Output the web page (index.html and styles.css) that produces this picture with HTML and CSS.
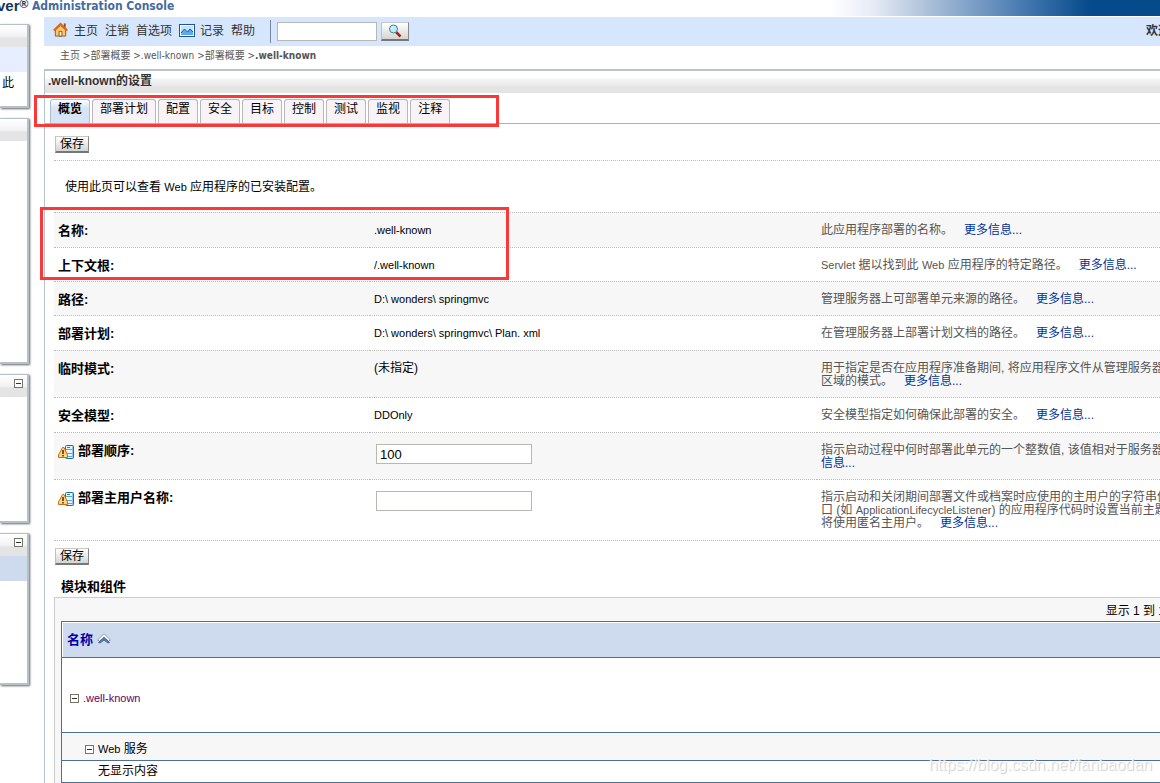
FILE: index.html
```
<!DOCTYPE html>
<html lang="zh-CN">
<head>
<meta charset="utf-8">
<title>.well-known的设置</title>
<link rel="stylesheet" href="styles.css">
</head>
<body>
<svg class="defs" aria-hidden="true">
  <symbol id="restart" viewBox="0 0 16 16">
    <rect x="7.5" y="1.5" width="8" height="13" rx="1" fill="#e8f4fd" stroke="#1f6ba8"/>
    <path d="M8 5.500h7M8 9.500h7M8 12.500h7" stroke="#5fa6d8"/>
    <path d="M14.500 2v12" stroke="#8cc4ea"/>
    <rect x="9" y="3" width="3" height="1" fill="#2e9a3a"/>
    <path d="M4.500 3.500h1.500L9.500 11v2.500H.5V11z" fill="#fcd581" stroke="#c96f14"/>
    <path d="M5 6v4M5 11v1.500" stroke="#4a2a08" stroke-width="1.500"/>
  </symbol>
</svg>
<header class="banner">
  <span class="brand">ver<sup>®</sup></span><span class="product">Administration Console</span>
</header>
<div class="page">
  <aside class="sidebar">
    <section class="card card-a"><div class="card-head"></div><div class="card-blue"></div><div class="card-text">此</div></section>
    <section class="card card-b"><div class="card-head"></div></section>
    <section class="card card-c"><div class="card-head"><button class="toggle" aria-label="折叠"></button></div></section>
    <section class="card card-d"><div class="card-head"><button class="toggle" aria-label="折叠"></button></div><div class="card-band"></div></section>
  </aside>
  <main class="main">
    <nav class="toolbar">
      <svg class="home" viewBox="0 0 16 16"><path d="M2.500 8v6.500h11V8L8 3z" fill="#fbc56a" stroke="#9a5a18"/><path d="M12.500 1v5" stroke="#a0421c" stroke-width="2"/><path d="M.8 8.500 8 1.500l7.200 7" fill="none" stroke="#d9661c" stroke-width="2"/><path d="M6.500 14.500V9.500h3v5z" fill="#fff3d0" stroke="#7a5a4a"/></svg>
      <a href="#">主页</a><a href="#">注销</a><a href="#">首选项</a>
      <svg class="chart" viewBox="0 0 16 14"><rect x=".5" y=".5" width="15" height="12" fill="#fff" stroke="#20549a"/><rect x="2" y="2" width="12" height="9" fill="#c4e2fa"/><path d="M2 10 5.500 5 8 8l3-3 3 3v3H2z" fill="#5aaaf0"/><path d="M2 9 5.500 5 8.500 8 11 5l3 3" fill="none" stroke="#1c4f9c"/></svg>
      <a href="#">记录</a><a href="#">帮助</a>
      <form class="search"><input type="text" aria-label="搜索"><button type="button" aria-label="搜索"><svg viewBox="0 0 14 14"><path d="M8 8l4.500 4.500" stroke="#b41c1c" stroke-width="2.500"/><circle cx="5.500" cy="5" r="4" fill="#b8ecfa" stroke="#4c7f9c"/><path d="M3.500 5a2 2 0 0 1 2-2" fill="none" stroke="#fff"/></svg></button></form>
      <span class="welcome">欢迎</span>
    </nav>
    <div class="crumbs"><a href="#">主页</a> &gt;<a href="#">部署概要</a> &gt;<a href="#">.well-known</a> &gt;<a href="#">部署概要</a> &gt;<b>.well-known</b></div>
    <section class="panel">
      <h1 class="title">.well-known的设置</h1>
      <nav class="tabs">
        <a class="tab selected" href="#">概览</a><a class="tab" href="#">部署计划</a><a class="tab" href="#">配置</a><a class="tab" href="#">安全</a><a class="tab" href="#">目标</a><a class="tab" href="#">控制</a><a class="tab" href="#">测试</a><a class="tab" href="#">监视</a><a class="tab" href="#">注释</a>
      </nav>
      <div class="content">
        <div class="actions"><button class="save">保存</button></div>
        <p class="intro">使用此页可以查看 <span class="latin">Web</span> 应用程序的已安装配置。</p>
        <table class="settings">
          <colgroup><col class="col-label"><col class="col-value"><col></colgroup>
          <tr class="roomy"><th>名称:</th><td class="latin">.well-known</td><td class="help">此应用程序部署的名称。<a href="#">更多信息...</a></td></tr>
          <tr><th>上下文根:</th><td class="latin">/.well-known</td><td class="help"><span class="latin">Servlet</span> 据以找到此 <span class="latin">Web</span> 应用程序的特定路径。<a href="#">更多信息...</a></td></tr>
          <tr><th>路径:</th><td class="latin">D:\ wonders\ springmvc</td><td class="help">管理服务器上可部署单元来源的路径。<a href="#">更多信息...</a></td></tr>
          <tr class="roomy"><th>部署计划:</th><td class="latin">D:\ wonders\ springmvc\ Plan. xml</td><td class="help">在管理服务器上部署计划文档的路径。<a href="#">更多信息...</a></td></tr>
          <tr><th>临时模式:</th><td>(未指定)</td><td class="help">用于指定是否在应用程序准备期间, 将应用程序文件从管理服务器<br>区域的模式。<a href="#">更多信息...</a></td></tr>
          <tr class="roomy"><th>安全模型:</th><td class="latin">DDOnly</td><td class="help">安全模型指定如何确保此部署的安全。<a href="#">更多信息...</a></td></tr>
          <tr><th><svg class="restart"><use href="#restart"/></svg><label for="order">部署顺序:</label></th><td class="field"><input id="order" type="text" value="100"></td><td class="help">指示启动过程中何时部署此单元的一个整数值, 该值相对于服务器<br><a class="cont" href="#">信息...</a></td></tr>
          <tr class="roomy"><th><svg class="restart"><use href="#restart"/></svg><label for="principal">部署主用户名称:</label></th><td class="field"><input id="principal" type="text"></td><td class="help">指示启动和关闭期间部署文件或档案时应使用的主用户的字符串值<br>口 (如 <span class="latin">ApplicationLifecycleListener</span>) 的应用程序代码时设置当前主题<br>将使用匿名主用户。<a href="#">更多信息...</a></td></tr>
        </table>
        <div class="actions bottom"><button class="save">保存</button></div>
        <h2 class="subtitle">模块和组件</h2>
        <div class="listing">
          <div class="count">显示 1 到 1</div>
          <table class="modules">
            <tr><th><a href="#">名称 <svg viewBox="0 0 14 12"><path d="M.5 7 7 .8 13.500 7 11.500 8 7 4 2.500 8z" fill="#fff" stroke="#8ba0bb"/><path d="M1.500 9.500 7 4.500l5.500 5-1.500.5-4-3-4 3z" fill="#5c7ca6" stroke="#4a6890"/></svg></a></th></tr>
            <tr class="module"><td><button class="toggle" aria-label="折叠"></button><a class="latin" href="#">.well-known</a></td></tr>
            <tr class="group"><td><button class="toggle" aria-label="折叠"></button><span class="latin">Web</span> 服务</td></tr>
            <tr class="empty"><td>无显示内容</td></tr>
          </table>
        </div>
      </div>
    </section>
  </main>
</div>
<div class="mark mark-tabs"></div>
<div class="mark mark-names"></div>
<div class="watermark">https://blog.csdn.net/fanbaodan</div>
</body>
</html>
```
FILE: styles.css
```
* { box-sizing: border-box; }
body {
  margin: 0;
  position: relative;
  overflow: hidden;
  background: #fff;
  color: #000;
  font: 12px/13px "Liberation Sans", "Noto Sans CJK SC", sans-serif;
}
a { text-decoration: none; color: inherit; }
.defs { display: none; }
.latin { font-size: 11px; }

.banner {
  display: flex;
  height: 16px;
  line-height: 12px;
  font-weight: bold;
  background: linear-gradient(to right, #fff 0, #e6ecf6 42px, #a9bfd8 100px, #4a7cb2 190px, #054a8b 260px) right / 330px 100% no-repeat;
}
.brand { width: 34px; font-size: 15px; color: #16365c; margin-left: -3px; }
.brand sup { font-size: 12px; line-height: 1px; vertical-align: 3px; }
.product { font: bold 12px/13px "DejaVu Sans Condensed", "DejaVu Sans", sans-serif; color: #456c9e; margin-left: 1px; }

.page { display: flex; padding-top: 1px; }
.sidebar { flex: 0 0 44px; padding-top: 7px; }
.card {
  width: 29px;
  margin-bottom: 10px;
  background: #fff;
  border: solid #b4c2c8;
  border-width: 1px 2px 2px 0;
  box-shadow: 1px 1px 2px #666;
}
.card-a { height: 84px; }
.card-b { height: 246px; }
.card-c { height: 149px; }
.card-d { height: 152px; }
.card-head {
  height: 22px;
  padding: 4px 4px 0 0;
  display: flex;
  justify-content: flex-end;
  background: linear-gradient(#fff, #f3f3f6 50%, #e4e4e4 60%, #e4e4e4);
}
.card-blue { height: 25px; background: #e6eeff; }
.card-text { padding: 5px 0 0 2px; }
.card-band { height: 25px; background: #cedaee; }

.toggle {
  width: 9px;
  height: 9px;
  padding: 0;
  border: 1px solid #777768;
  border-radius: 0;
  background: linear-gradient(#333, #333) center / 5px 1px no-repeat #fff;
}

.main { flex: 1; min-width: 0; }
.toolbar {
  display: flex;
  align-items: center;
  height: 29px;
  padding-left: 9px;
  gap: 7px;
  overflow: hidden;
  background: #d6e6ff;
  color: #333;
  white-space: nowrap;
}
.home { width: 15px; height: 16px; margin-right: -1px; margin-bottom: 4px; }
.chart { width: 16px; height: 14px; margin-right: -2px; margin-bottom: 2px; }
.search {
  display: flex;
  align-items: center;
  gap: 4px;
  margin-left: 8px;
  padding-left: 6px;
  height: 23px;
  border-left: 1px solid #73869c;
}
.search input { width: 100px; height: 19px; border: 1px solid #b8b8b0; background: #fff; }
.search button { width: 28px; height: 19px; padding: 0; }
.search svg { width: 14px; height: 14px; display: block; margin: auto; }
.search button, .save {
  border: 1px solid;
  border-color: #c8c8c8 #888 #777 #c0c0c0;
  border-bottom-width: 2px;
  border-radius: 0;
  background: linear-gradient(#fff, #d4d4d0);
  color: #000;
}
.welcome { margin-left: auto; margin-right: -10px; font-weight: bold; }
.crumbs { height: 23px; padding: 3px 16px; font: 10px/13px "DejaVu Sans Condensed", "DejaVu Sans", "Noto Sans CJK SC", sans-serif; color: #555; }

.panel { border-top: 2px solid #b9c4ca; border-left: 1px solid #b4c4ca; }
.title {
  margin: 0;
  height: 22px;
  padding: 3px;
  font-size: 12px;
  line-height: 15px;
  color: #333;
  background: linear-gradient(#fff 7px, #f5f5f7 8px, #ececec 14px, #e4e4e4 15px);
}
.tabs {
  display: flex;
  align-items: flex-end;
  gap: 2px;
  height: 31px;
  padding-left: 5px;
  border-bottom: 1px solid #a0b3cc;
}
.tab {
  height: 24px;
  padding: 2px 7px;
  border: 1px solid #b8b8b8;
  border-bottom: 0;
  border-radius: 3px 3px 0 0;
  background: #f7f3f7;
  line-height: 15px;
}
.selected { font-weight: bold; background: linear-gradient(#fff, #d6e4f6 8px); border-color: #a8bdd0; }

.content { padding-left: 9px; }
.actions { height: 37px; padding: 12px 1px 0; border-bottom: 1px dotted #bbb; }
.save { display: block; width: 34px; height: 17px; padding: 0; font: inherit; line-height: 13px; }
.intro { margin: 0; padding: 20px 11px 18px; }

.settings { width: 100%; table-layout: fixed; border-collapse: separate; border-spacing: 0; border-bottom: 1px dotted #bbb; }
.col-label { width: 316px; }
.col-value { width: 447px; }
.settings th, .settings td { padding: 11px 4px 9px; border-top: 1px dotted #bbb; vertical-align: top; text-align: left; white-space: nowrap; }
.settings .roomy th, .settings .roomy td { padding-bottom: 10px; }
.settings th { font-size: 13px; }
.settings tr:nth-child(odd) { background: #f7f7f7; }
.settings .help { color: #555; }
.help a { color: #039; margin-left: 11px; }
.help .cont { margin-left: 0; }
.restart { width: 16px; height: 16px; margin-right: 4px; vertical-align: top; }
.settings .field { padding: 11px 6px 0; }
.field input { display: block; width: 156px; height: 20px; padding: 1px 3px; border: 1px solid #b8b8b0; background: #fff; font: 13px/16px "Liberation Sans", sans-serif; }

.bottom { height: 25px; padding-top: 7px; border: 0; }
.subtitle { margin: 0; padding: 14px 7px 4px; font-size: 13px; line-height: 13px; }
.listing { border: solid #ccc; border-width: 1px 0 0 1px; background: #f7f7f7; padding-left: 6px; }
.count { height: 23px; padding-top: 7px; margin-right: -5px; text-align: right; }
.modules { width: 100%; border-collapse: separate; border-spacing: 0; border-left: 1px solid #4f7191; background: #fff; }
.modules th, .modules td { padding: 0 5px; border-top: 1px solid #4f7191; text-align: left; }
.modules th { height: 36px; background: #cedaee; color: #00a; font-size: 13px; box-shadow: inset 1px 1px #fff; }
.modules th svg { width: 14px; height: 12px; vertical-align: -1px; }
.modules .toggle { margin-right: 4px; vertical-align: 0; }
.modules a.latin { color: #606; }
.modules .module td { height: 75px; padding: 6px 8px 0; }
.modules .group td { height: 28px; padding: 6px 23px 0; background: #f7f7f7; }
.modules .empty td { height: 23px; padding-left: 36px; border-bottom: 1px solid #4f7191; }

.mark { position: absolute; border: 3px solid #fb3838; }
.mark-tabs { left: 34px; top: 95px; width: 465px; height: 32px; }
.mark-names { left: 40px; top: 207px; width: 469px; height: 73px; }
.watermark { position: absolute; right: 8px; bottom: 8px; font-size: 16px; line-height: 20px; color: rgba(255,255,255,.8); text-shadow: 1px 1px 1px #ccc; }
```
